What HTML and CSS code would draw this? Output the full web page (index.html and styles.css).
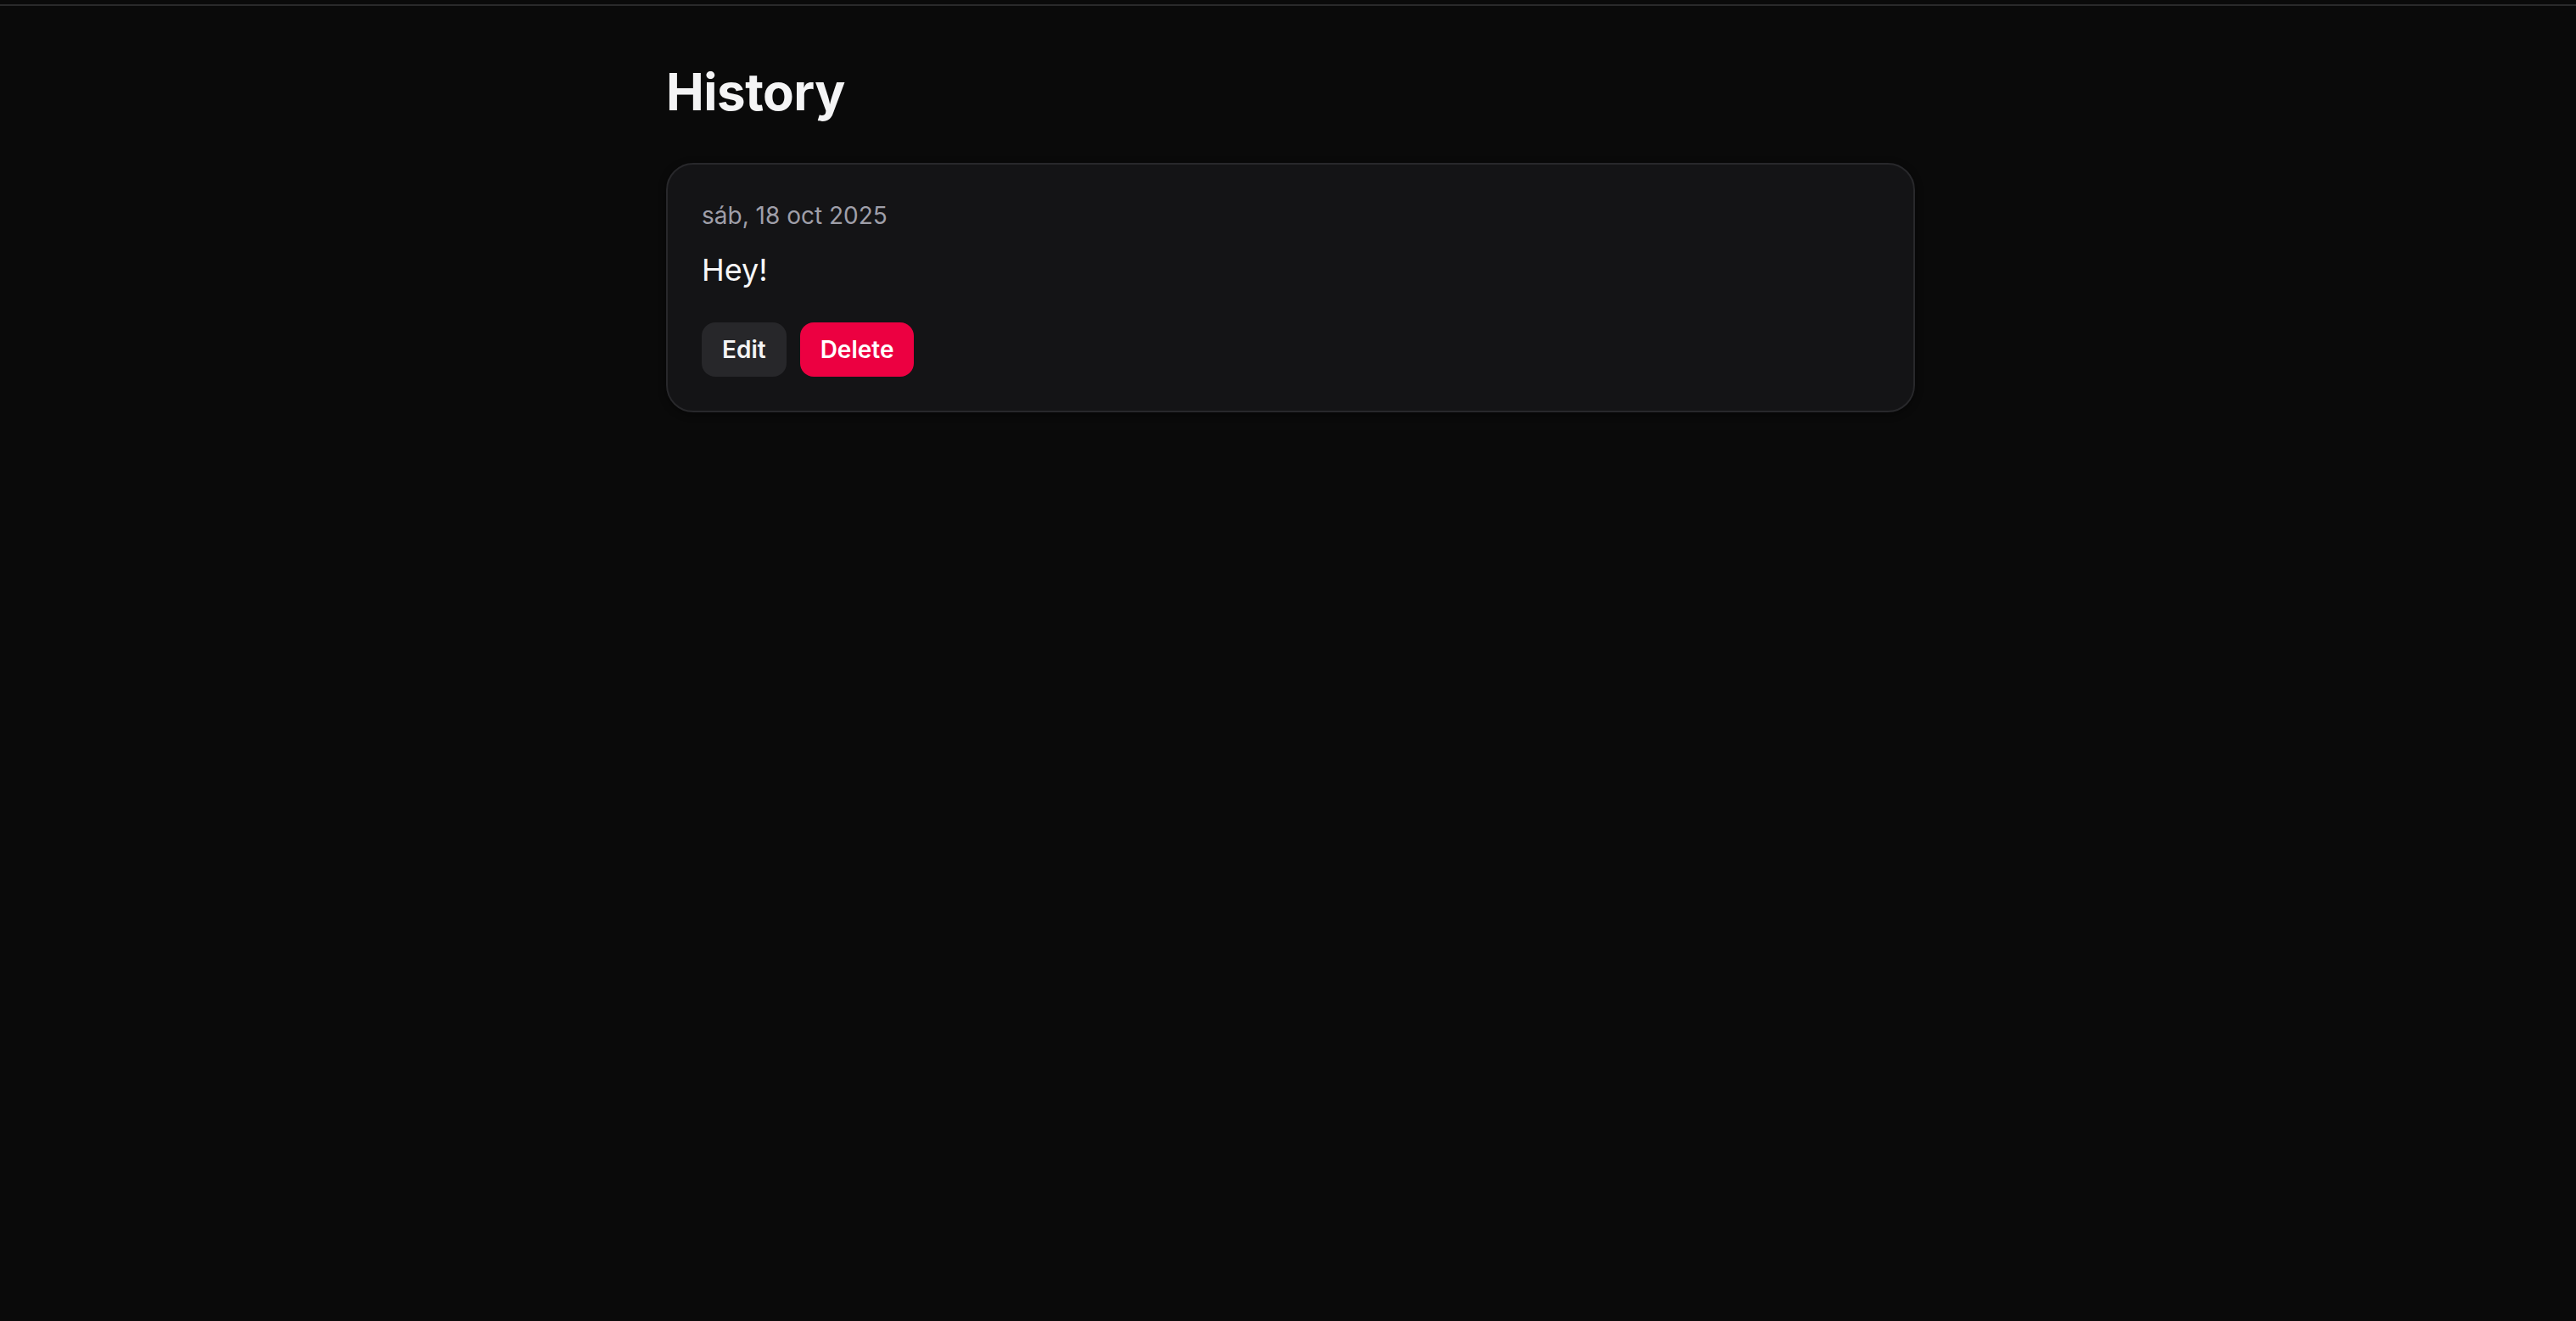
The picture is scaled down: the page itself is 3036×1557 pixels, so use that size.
FILE: index.html
```html
<!DOCTYPE html>
<html lang="es">
<head>
<meta charset="utf-8">
<title>History</title>
<link rel="stylesheet" href="styles.css">
</head>
<body>
<header class="topbar"></header>
<main class="container">
  <h1 class="title">History</h1>
  <section class="entries">
    <article class="card">
      <div class="date">sáb, 18 oct 2025</div>
      <p class="text">Hey!</p>
      <div class="actions">
        <button class="btn btn-edit" type="button">Edit</button>
        <button class="btn btn-delete" type="button">Delete</button>
      </div>
    </article>
  </section>
</main>
</body>
</html>
```
FILE: styles.css
```css
* { box-sizing: border-box; }
html, body {
  margin: 0;
  padding: 0;
  background: #0a0a0a;
  color: #f4f4f5;
  font-family: Inter, "Noto Sans", "Liberation Sans", sans-serif;
  min-height: 100%;
}
body { min-height: 1557px; }
.topbar {
  height: 7px;
  border-bottom: 2px solid #2a2a2b;
}
.container {
  width: 1472px;
  margin: 0 auto;
  padding-top: 65px;
  position: relative;
  left: 3px;
}
.title {
  margin: 0 0 48px 0;
  font-size: 60px;
  line-height: 72px;
  font-weight: 700;
  color: #f4f4f5;
  letter-spacing: -0.5px;
}
.card {
  background: #141416;
  border: 2px solid #28282b;
  border-radius: 32px;
  padding: 40px;
  box-shadow: 0 2px 10px rgba(0, 0, 0, 0.45);
}
.date {
  font-size: 28px;
  line-height: 40px;
  color: #9f9fa9;
}
.text {
  margin: 16px 0 0 0;
  font-size: 36px;
  line-height: 56px;
  color: #f7f7f8;
}
.actions {
  margin-top: 34px;
  display: flex;
  gap: 16px;
}
.btn {
  font-family: inherit;
  font-size: 28px;
  line-height: 40px;
  font-weight: 600;
  padding: 12px 24px;
  border: none;
  border-radius: 16px;
  color: #ffffff;
  cursor: pointer;
}
.btn-edit { background: #27272a; color: #f4f4f5; }
.btn-delete { background: #ec0041; }
```
